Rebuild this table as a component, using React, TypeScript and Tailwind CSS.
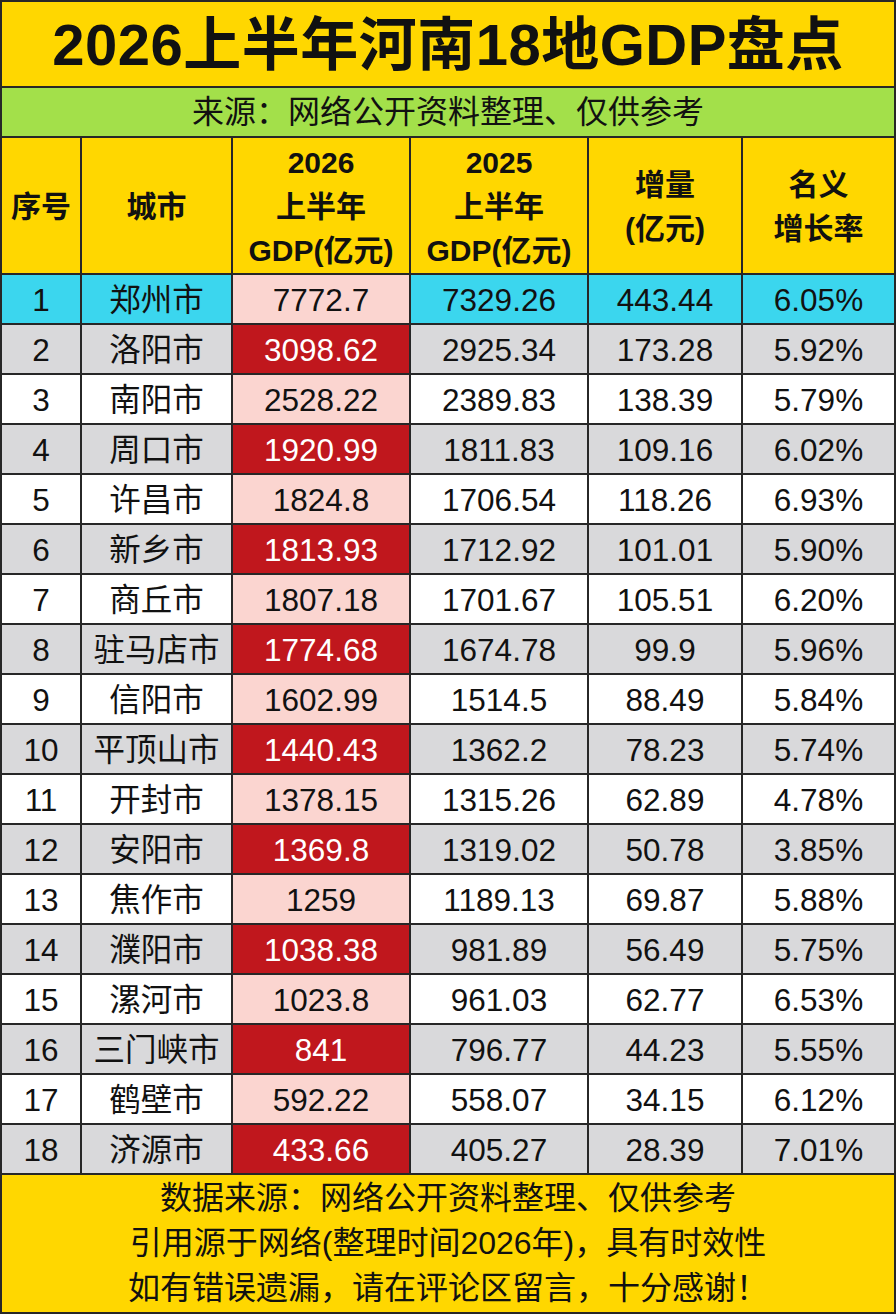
import React from "react";

type Row = [string, string, string, string, string];

const rows: Row[] = [
    ["郑州市", "7772.7", "7329.26", "443.44", "6.05%"],
    ["洛阳市", "3098.62", "2925.34", "173.28", "5.92%"],
    ["南阳市", "2528.22", "2389.83", "138.39", "5.79%"],
    ["周口市", "1920.99", "1811.83", "109.16", "6.02%"],
    ["许昌市", "1824.8", "1706.54", "118.26", "6.93%"],
    ["新乡市", "1813.93", "1712.92", "101.01", "5.90%"],
    ["商丘市", "1807.18", "1701.67", "105.51", "6.20%"],
    ["驻马店市", "1774.68", "1674.78", "99.9", "5.96%"],
    ["信阳市", "1602.99", "1514.5", "88.49", "5.84%"],
    ["平顶山市", "1440.43", "1362.2", "78.23", "5.74%"],
    ["开封市", "1378.15", "1315.26", "62.89", "4.78%"],
    ["安阳市", "1369.8", "1319.02", "50.78", "3.85%"],
    ["焦作市", "1259", "1189.13", "69.87", "5.88%"],
    ["濮阳市", "1038.38", "981.89", "56.49", "5.75%"],
    ["漯河市", "1023.8", "961.03", "62.77", "6.53%"],
    ["三门峡市", "841", "796.77", "44.23", "5.55%"],
    ["鹤壁市", "592.22", "558.07", "34.15", "6.12%"],
    ["济源市", "433.66", "405.27", "28.39", "7.01%"],
];

const headers: string[][] = [
    ["序号"],
    ["城市"],
    ["2026", "上半年", "GDP(亿元)"],
    ["2025", "上半年", "GDP(亿元)"],
    ["增量", "(亿元)"],
    ["名义", "增长率"],
];

export default function App() {
    return (
        <div className="w-[896px] h-[1314px] bg-[#272727] p-[2px] font-['Liberation_Sans','Noto_Sans_CJK_SC',sans-serif] text-[#111]">
            <div className="grid grid-cols-[78px_149px_176px_176px_152px_151px] gap-[2px]">
                {/* Title */}
                <div className="col-span-6 h-[84px] bg-[#ffd700] flex items-center justify-center text-[58px] font-bold tracking-[0.5px]">
                    2026上半年河南18地GDP盘点
                </div>
                <div className="col-span-6 h-[48px] bg-[#a3e04a] flex items-center justify-center text-[32px]">
                    来源：网络公开资料整理、仅供参考
                </div>

                {/* Header */}
                {headers.map((lines, i) => (
                    <div
                        key={i}
                        className="h-[135px] bg-[#ffd700] flex flex-col items-center justify-center pt-[3px] text-[30px] font-bold leading-[44px]"
                    >
                        {lines.map(l => (
                            <span key={l}>{l}</span>
                        ))}
                    </div>
                ))}

                {/* Rows */}
                {rows.map((r, i) => {
                    const first = i === 0;
                    const even = i % 2 === 1;
                    const rowBg = first ? "bg-[#3bd6ee]" : even ? "bg-[#d9d9db]" : "bg-white";
                    const gdpBg = even ? "bg-[#c0171d] text-white" : "bg-[#fbd5d0]";
                    const cell = "h-[48px] flex items-center justify-center pt-[3px] text-[31.5px]";
                    return (
                        <React.Fragment key={i}>
                            <div className={`${cell} ${rowBg}`}>{i + 1}</div>
                            <div className={`${cell} ${rowBg}`}>{r[0]}</div>
                            <div className={`${cell} ${gdpBg}`}>{r[1]}</div>
                            <div className={`${cell} ${rowBg}`}>{r[2]}</div>
                            <div className={`${cell} ${rowBg}`}>{r[3]}</div>
                            <div className={`${cell} ${rowBg}`}>{r[4]}</div>
                        </React.Fragment>
                    );
                })}

                {/* Footer */}
                <div className="col-span-6 h-[137px] bg-[#ffd700] flex flex-col items-center justify-center text-[32px] leading-[45px]">
                    <span>数据来源：网络公开资料整理、仅供参考</span>
                    <span>引用源于网络(整理时间2026年)，具有时效性</span>
                    <span>如有错误遗漏，请在评论区留言，十分感谢！</span>
                </div>
            </div>
        </div>
    );
}
